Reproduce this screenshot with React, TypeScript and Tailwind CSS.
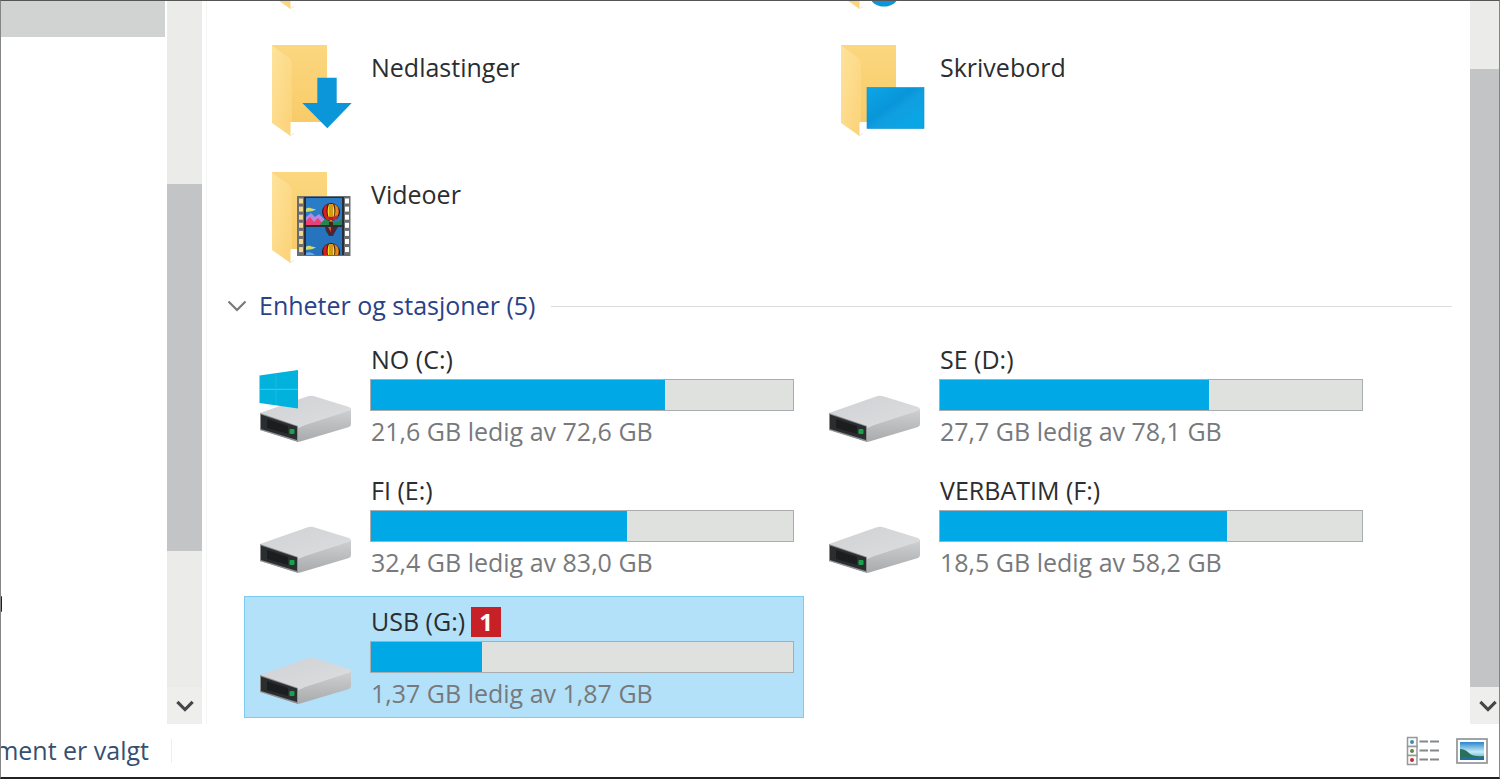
import type { ReactNode } from 'react'

type Overlay = 'none' | 'music' | 'download' | 'desktop' | 'video'

interface Folder {
  name: string
  overlay: Overlay
}

interface Drive {
  name: string
  free: string
  used: number
  system?: boolean
  selected?: boolean
  badge?: string
}

// The first row is scrolled almost out of view, only the icon tips remain.
const FOLDERS: Folder[] = [
  { name: '', overlay: 'none' },
  { name: '', overlay: 'music' },
  { name: 'Nedlastinger', overlay: 'download' },
  { name: 'Skrivebord', overlay: 'desktop' },
  { name: 'Videoer', overlay: 'video' },
]

const DRIVES: Drive[] = [
  { name: 'NO (C:)', free: '21,6 GB ledig av 72,6 GB', used: 69.7, system: true },
  { name: 'SE (D:)', free: '27,7 GB ledig av 78,1 GB', used: 63.7 },
  { name: 'FI (E:)', free: '32,4 GB ledig av 83,0 GB', used: 60.7 },
  { name: 'VERBATIM (F:)', free: '18,5 GB ledig av 58,2 GB', used: 68 },
  { name: 'USB (G:)', free: '1,37 GB ledig av 1,87 GB', used: 26.3, selected: true, badge: '1' },
]

function Balloon({ y }: { y: number }) {
  return (
    <g transform={`translate(73 ${y})`}>
      <ellipse cx="0" cy="0" rx="9" ry="9" fill="#3a1414" />
      <path d="M-6-6C-9-2-8 4-4 8L-2 8C-5 2-5-4-3-8Z" fill="#d81f26" />
      <path d="M-2-8C-4-3-4 3-1 9L1 9C4 3 4-3 2-8Z" fill="#ffe01a" />
      <path d="M6-6C9-2 8 4 4 8L2 8C5 2 5-4 3-8Z" fill="#e8871c" />
      <path d="M-7 3Q0 7 7 3L4 8H-4Z" fill="#d81f26" />
      <path d="M-1-8V9M1-8V9" stroke="#7c1717" strokeWidth=".7" />
      <rect x="-2" y="10" width="4" height="3" fill="#4b2415" />
    </g>
  )
}

function VideoOverlay() {
  const holes = [0, 1, 2, 3, 4, 5, 6]
  return (
    <g>
      <rect x="39" y="26" width="53.5" height="60" fill="#6b6e70" />
      <rect x="46" y="27" width="40" height="58" fill="#2a2d35" />
      <svg x="48" y="28" width="36" height="27" viewBox="48 28 36 27">
        <rect x="48" y="28" width="36" height="27" fill="#2b7cc6" />
        <path d="M48 39c4-3 6 1 10 0-3 3-6 2-10 3Z" fill="#cfdc6b" />
        <path d="M48 47l5-4 4 4 4-3 5 5v6H48Z" fill="#b58be0" />
        <path d="M48 51l4-4 4 5 4-4 4 5v2H48Z" fill="#ee3f73" />
        <path d="M62 55q4-8 10-4t12-2v6Z" fill="#23884a" />
        <Balloon y={42} />
      </svg>
      <svg x="48" y="57" width="36" height="28" viewBox="48 57 36 28">
        <rect x="48" y="57" width="36" height="28" fill="#2674bd" />
        <path d="M67 57h13l-3 5-2 4h-4l-3-5Z" fill="#4a2639" />
        <path d="M70 57h3v5Z" fill="#df5b2c" />
        <path d="M48 77c4-3 6 1 10 0-3 3-6 2-10 3Z" fill="#cfdc6b" />
        <path d="M48 83q5-2 9 2h-9Z" fill="#6ba7e4" />
        <Balloon y={82} />
      </svg>
      {holes.map((i) => (
        <g key={i}>
          <rect x="41" y={28.5 + i * 8.1} width="4" height="5" fill="#f3d690" />
          <rect x="87" y={28.5 + i * 8.1} width="4" height="5" fill="#fff" />
        </g>
      ))}
    </g>
  )
}

function FolderIcon({ overlay }: { overlay: Overlay }) {
  return (
    <svg viewBox="0 0 96 96" className="size-24 shrink-0 overflow-visible" aria-hidden="true">
      <defs>
        <linearGradient id="folder-back" x1="0" y1="0" x2="0" y2="1">
          <stop offset="0" stopColor="#fbd77f" />
          <stop offset="1" stopColor="#f8cb68" />
        </linearGradient>
        <linearGradient id="folder-front" x1="0" y1="0" x2="1" y2="1">
          <stop offset="0" stopColor="#fee39c" />
          <stop offset="1" stopColor="#fbd277" />
        </linearGradient>
        <linearGradient id="desktop-fill" x1="0" y1="0" x2="1" y2="1">
          <stop offset="0" stopColor="#0da6e6" />
          <stop offset=".42" stopColor="#0896d9" />
          <stop offset=".56" stopColor="#109fe0" />
          <stop offset="1" stopColor="#06a9e9" />
        </linearGradient>
      </defs>
      <path d="M31 93l5-3v1l-4 2Z" fill="#e3e3e8" />
      <path d="M14 2h55v77H30Z" fill="url(#folder-back)" />
      <path d="M14 2.500L31.500 15q2.500 2 2.500 5v57l-1.500 3v13L14 80Z" fill="url(#folder-front)" />
      {overlay === 'music' && <ellipse cx="57" cy="80" rx="14" ry="10.500" fill="#0a96d8" />}
      {overlay === 'download' && (
        <path d="M59.300 34.700h19.400V60h15L69.300 85.200 44.300 60h15Z" fill="#0a96d8" />
      )}
      {overlay === 'desktop' && (
        <rect x="40" y="44.500" width="57" height="41" fill="url(#desktop-fill)" stroke="#0b8fcb" strokeWidth=".6" />
      )}
      {overlay === 'video' && <VideoOverlay />}
    </svg>
  )
}

function DriveIcon({ system }: { system?: boolean }) {
  return (
    <svg viewBox="0 0 96 96" className="size-24 shrink-0" aria-hidden="true">
      <defs>
        <linearGradient id="drive-top" x1="0" y1="0" x2="1" y2="1">
          <stop offset="0" stopColor="#cfd1d4" />
          <stop offset="1" stopColor="#dddee0" />
        </linearGradient>
        <linearGradient id="drive-side" x1="0" y1="0" x2="0" y2="1">
          <stop offset="0" stopColor="#cfd0d2" />
          <stop offset="1" stopColor="#a9aaac" />
        </linearGradient>
      </defs>
      <path d="M2 67.500L40 80 93 62v15q0 2-2 3L44 94q-3 1.500-6 0L2 83Z" fill="url(#drive-side)" />
      <path d="M2 66L49 49.500q4-1.500 8 0L91 60q3 1.500 1 3.500L47 78q-4 2-7 3Z" fill="url(#drive-top)" />
      <path d="M2 66l38 13v16L2 83Z" fill="#8d8f91" />
      <path d="M3 67.500L39 79.500V93L3 82Z" fill="#2b2e30" />
      <path d="M9 72l21 7v8L9 81Z" fill="#1b1d1f" />
      <rect x="31.500" y="82" width="5" height="5" rx="1" fill="#17a34a" />
      {system && (
        <g>
          <path d="M1.500 28.500L40 23v38.500L1.500 56Z" fill="#00b2dc" />
          <path d="M1.500 42.300H40" stroke="#5ccfe9" strokeWidth=".8" />
          <path d="M18 26.200V58.200" stroke="#2abfe2" strokeWidth=".6" />
        </g>
      )}
    </svg>
  )
}

function Chevron({ className, width }: { className: string; width: number }) {
  return (
    <svg viewBox="0 0 20 12" className={className} fill="none" stroke="currentColor" strokeWidth={width} aria-hidden="true">
      <path d="M1.500 1.500L10 10l8.500-8.500" />
    </svg>
  )
}

function Tile({ selected, className, children }: { selected?: boolean; className: string; children: ReactNode }) {
  return (
    <button
      type="button"
      className={`flex items-center gap-4 border pl-[13px] pr-[9px] text-left ${className} ${
        selected ? 'border-[#7ccbf0] bg-[#b3e1f9]' : 'border-transparent'
      }`}
    >
      {children}
    </button>
  )
}

function DriveTile({ drive }: { drive: Drive }) {
  return (
    <Tile selected={drive.selected} className="h-[122px]">
      <DriveIcon system={drive.system} />
      <span className="flex min-w-0 flex-1 flex-col gap-1">
        <span className="flex h-8 items-end gap-1.5 pl-px leading-8">
          {drive.name}
          {drive.badge && (
            <span className="flex size-[30px] items-center justify-center bg-[#c82027] text-2xl font-bold text-white">
              {drive.badge}
            </span>
          )}
        </span>
        <span className="block h-8 border border-[#a9adb0] bg-[#dfe1df]">
          <span className="block h-full bg-[#00a9e5]" style={{ width: `${drive.used}%` }} />
        </span>
        <span className="h-8 pl-px leading-8 text-[#77797c]">{drive.free}</span>
      </span>
    </Tile>
  )
}

function Scrollbar({ before, thumb, after, className }: { before: string; thumb: string; after: string; className: string }) {
  return (
    <div className={`flex w-[35px] shrink-0 flex-col bg-[#ebebea] ${className}`}>
      <div className={before} />
      <div className={`bg-[#c2c4c6] ${thumb}`} />
      <div className={after} />
      <button type="button" aria-label="Rull ned" className="flex h-[37px] shrink-0 items-center justify-center bg-[#eeeeed] text-[#444648]">
        <Chevron className="h-3 w-[18px]" width={3.5} />
      </button>
    </div>
  )
}

export default function App() {
  return (
    <div className="flex h-screen flex-col overflow-hidden border-x border-t border-b-2 border-x-[#858585] border-t-[#555] border-b-[#222] bg-white font-['Open_Sans','Noto_Sans',sans-serif] text-[25px] text-[#2b2d30]">
      <div className="flex min-h-0 flex-1">
        <nav className="flex w-[166px] shrink-0 flex-col">
          <div className="mr-0.5 h-9 bg-[#d1d3d2]" />
          <div className="flex flex-1 flex-col justify-end pb-28">
            <div className="h-4 w-px rounded-r-full bg-[#0b1c66]" />
          </div>
        </nav>
        <Scrollbar className="" before="flex-[183]" thumb="flex-[367]" after="flex-[136]" />

        <main className="ml-1 flex min-w-0 flex-1 flex-col justify-end overflow-hidden border-l border-[#f5f5f5] pb-1.5 pl-[37px] pr-[18px]">
          <div className="grid shrink-0 grid-cols-[repeat(auto-fill,560px)] gap-[9px]">
            {FOLDERS.map((folder, i) => (
              <Tile key={i} className="h-[118px]">
                <FolderIcon overlay={folder.overlay} />
                <span className="h-20 pl-px leading-8">{folder.name}</span>
              </Tile>
            ))}
          </div>

          <button type="button" className="-ml-[17px] mb-2.5 mt-[11px] flex h-9 shrink-0 items-center text-left text-[#2b4288]">
            <Chevron className="mr-3 h-3 w-5 text-[#77797c]" width={2.2} />
            Enheter og stasjoner (5)
            <span className="ml-4 h-px flex-1 bg-[#dcdcdc]" />
          </button>

          <div className="grid shrink-0 grid-cols-[repeat(auto-fill,560px)] gap-[9px]">
            {DRIVES.map((drive) => (
              <DriveTile key={drive.name} drive={drive} />
            ))}
          </div>
        </main>
        <Scrollbar className="-mr-1.5" before="flex-[68]" thumb="flex-[618]" after="" />
      </div>

      <footer className="flex h-[53px] shrink-0 items-center">
        <div className="flex w-[148px] justify-end overflow-hidden whitespace-nowrap text-[#35506f]">ment er valgt</div>
        <div className="ml-[22px] h-6 w-px bg-[#eee]" />
        <button type="button" aria-label="Detaljer" className="ml-auto">
          <svg viewBox="0 0 34 30" className="h-[30px] w-[34px]" aria-hidden="true">
            {[0, 1, 2].map((i) => (
              <g key={i}>
                <rect x="1.500" y={1.5 + i * 9} width="9.500" height="9" fill="#fafafa" stroke="#96999b" strokeWidth="1.500" />
                <path d={`M13.500 ${5.5 + i * 9}h8.500M24 ${5.5 + i * 9}h9`} stroke="#85888a" strokeWidth="1.800" />
              </g>
            ))}
            <circle cx="6" cy="6" r="2" fill="#3a8fb5" />
            <circle cx="6" cy="15" r="2" fill="#65854a" />
            <circle cx="6" cy="24" r="2" fill="#c92a2a" />
          </svg>
        </button>
        <button type="button" aria-label="Store ikoner" className="ml-4 mr-[11px]">
          <svg viewBox="0 0 32 26" className="h-[26px] w-8" aria-hidden="true">
            <defs>
              <linearGradient id="view-sky" x1="0" y1="0" x2="0" y2="1">
                <stop offset="0" stopColor="#2b86cf" />
                <stop offset=".55" stopColor="#c6ecf5" />
                <stop offset="1" stopColor="#3c9dc8" />
              </linearGradient>
            </defs>
            <rect x="1" y="1" width="30" height="24" fill="#fff" stroke="#929597" strokeWidth="1.700" />
            <rect x="4" y="4" width="24" height="18" fill="url(#view-sky)" />
            <path d="M4 11q5 0 9 4t15 3v1H4Z" fill="#27705a" />
            <path d="M4 19h24v3H4Z" fill="#236da4" />
          </svg>
        </button>
      </footer>
    </div>
  )
}
